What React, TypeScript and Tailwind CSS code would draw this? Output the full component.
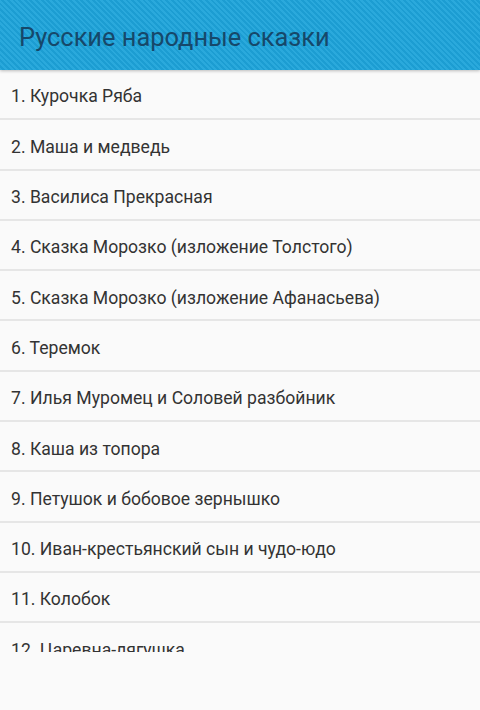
import * as React from 'react'

const tales = [
  'Курочка Ряба',
  'Маша и медведь',
  'Василиса Прекрасная',
  'Сказка Морозко (изложение Толстого)',
  'Сказка Морозко (изложение Афанасьева)',
  'Теремок',
  'Илья Муромец и Соловей разбойник',
  'Каша из топора',
  'Петушок и бобовое зернышко',
  'Иван-крестьянский сын и чудо-юдо',
  'Колобок',
  'Царевна-лягушка',
  'Гуси-лебеди',
]

export default function App() {
  return (
    <div className="h-[710px] w-[480px] bg-[#fafafa] font-['Roboto',sans-serif]">
      <header className="relative z-10 flex h-[70px] items-center bg-[repeating-linear-gradient(45deg,#2aa9dc_0px,#2aa9dc_2px,#1c9dd2_2px,#1c9dd2_4px)] pl-[19px] pt-[4px] shadow-[0_1px_3px_rgba(0,0,0,0.25)]">
        <h1 className="text-[25.4px] text-[#16486a]">Русские народные сказки</h1>
      </header>
      <ul className="h-[582px] overflow-hidden">
        {tales.map((t, i) => (
          <li
            key={i}
            className="flex h-[50.3px] items-center border-b-2 border-[#e6e6e6] pl-[11px] pt-[5px] text-[17.6px] text-[#333333]"
          >
            {i + 1}. {t}
          </li>
        ))}
      </ul>
    </div>
  )
}
